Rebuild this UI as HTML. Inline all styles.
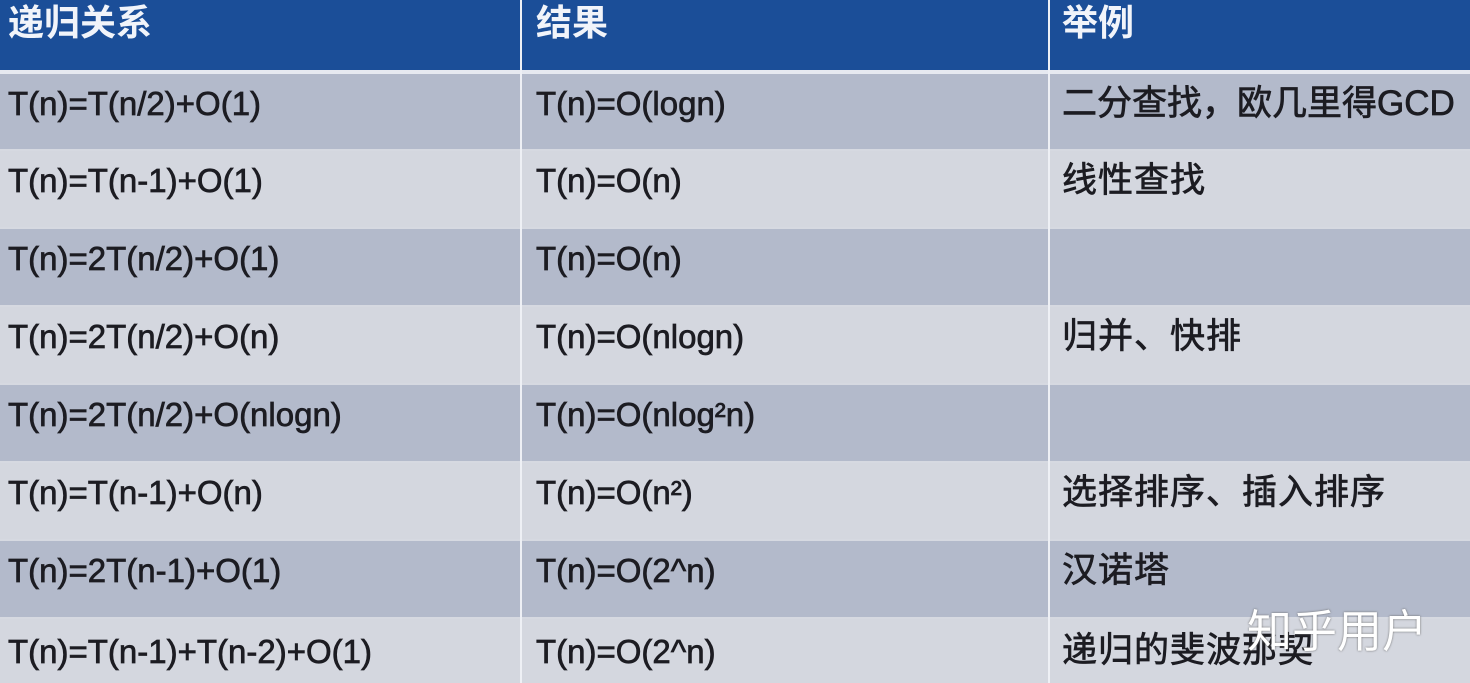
<!DOCTYPE html>
<html><head><meta charset="utf-8"><style>
html,body{margin:0;width:1470px;height:683px;overflow:hidden;}
body{position:relative;background:#d6d9e1;font-family:"Liberation Sans","Noto Sans CJK SC",sans-serif;}
.r{position:absolute;left:0;width:1470px;}
.c{position:absolute;top:0;font-size:33px;color:#1c1c22;line-height:1;white-space:nowrap;-webkit-text-stroke:0.7px #1c1c22;}
.z{font-size:35px;letter-spacing:1px;}
.h .c{color:#f1f4fa;font-size:36px;font-weight:bold;-webkit-text-stroke:0;}
.v{position:absolute;top:0;width:2px;height:683px;background:#eef0f5;}
</style></head><body>
<div class="r h" style="top:0;height:70px;background:#1b4e98"><div class="c" style="left:8px;top:5px">递归关系</div><div class="c" style="left:536px;top:5px">结果</div><div class="c" style="left:1062px;top:5px">举例</div></div>
<div class="r" style="top:70px;height:4px;background:#e6e9f0"></div>
<div class="r" style="top:74px;height:75px;background:#b3bacb"><div class="c" style="left:8px;top:13px">T(n)=T(n/2)+O(1)</div><div class="c" style="left:536px;top:13px">T(n)=O(logn)</div><div class="c z" style="left:1062px;top:12px;letter-spacing:0">二分查找，欧几里得GCD</div></div>
<div class="r" style="top:151px;height:76px;background:#d4d7df"><div class="c" style="left:8px;top:13px">T(n)=T(n-1)+O(1)</div><div class="c" style="left:536px;top:13px">T(n)=O(n)</div><div class="c z" style="left:1062px;top:12px">线性查找</div></div>
<div class="r" style="top:229px;height:76px;background:#b3bacb"><div class="c" style="left:8px;top:13px">T(n)=2T(n/2)+O(1)</div><div class="c" style="left:536px;top:13px">T(n)=O(n)</div></div>
<div class="r" style="top:307px;height:76px;background:#d4d7df"><div class="c" style="left:8px;top:13px">T(n)=2T(n/2)+O(n)</div><div class="c" style="left:536px;top:13px">T(n)=O(nlogn)</div><div class="c z" style="left:1062px;top:12px">归并、快排</div></div>
<div class="r" style="top:385px;height:76px;background:#b3bacb"><div class="c" style="left:8px;top:13px">T(n)=2T(n/2)+O(nlogn)</div><div class="c" style="left:536px;top:13px">T(n)=O(nlog²n)</div></div>
<div class="r" style="top:463px;height:76px;background:#d4d7df"><div class="c" style="left:8px;top:13px">T(n)=T(n-1)+O(n)</div><div class="c" style="left:536px;top:13px">T(n)=O(n²)</div><div class="c z" style="left:1062px;top:12px">选择排序、插入排序</div></div>
<div class="r" style="top:541px;height:76px;background:#b3bacb"><div class="c" style="left:8px;top:13px">T(n)=2T(n-1)+O(1)</div><div class="c" style="left:536px;top:13px">T(n)=O(2^n)</div><div class="c z" style="left:1062px;top:12px">汉诺塔</div></div>
<div class="r" style="top:619px;height:64px;background:#d4d7df"><div class="c" style="left:8px;top:16px">T(n)=T(n-1)+T(n-2)+O(1)</div><div class="c" style="left:536px;top:16px">T(n)=O(2^n)</div><div class="c z" style="left:1062px;top:14px">递归的斐波那契</div></div>
<div class="v" style="left:520px"></div><div class="v" style="left:1048px"></div>
<div style="position:absolute;left:1247px;top:605px;font-size:45px;color:#fff;font-family:'Noto Sans CJK SC',sans-serif;text-shadow:0 0 2px #666;line-height:1">知乎用户</div>
</body></html>
